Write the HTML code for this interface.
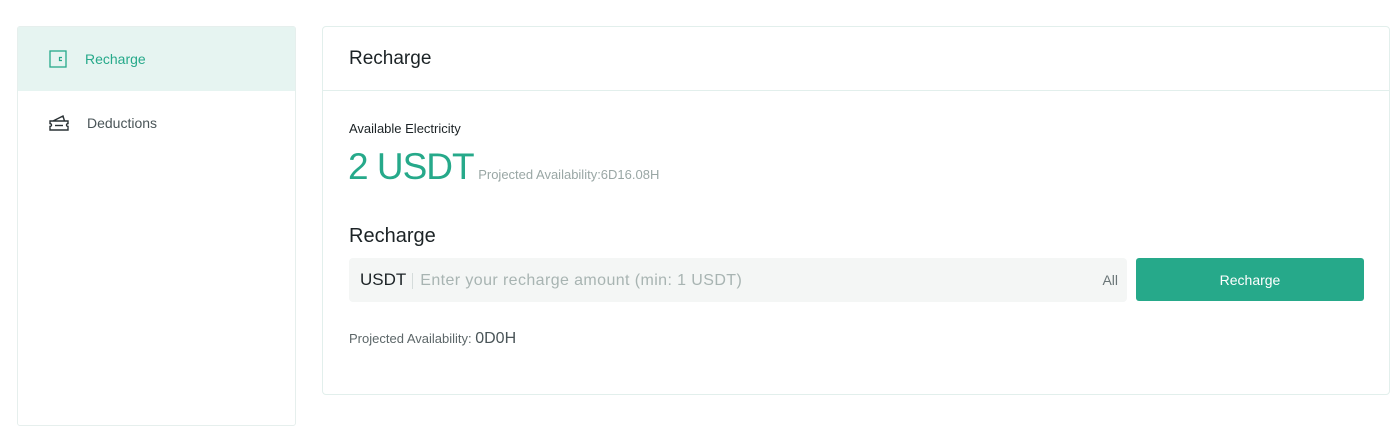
<!DOCTYPE html>
<html><head><meta charset="utf-8"><style>
*{margin:0;padding:0;box-sizing:border-box}
body{width:1400px;height:407px;background:#fff;font-family:"Liberation Sans","DejaVu Sans",sans-serif;position:relative;overflow:hidden}
.side{position:absolute;left:17px;top:26px;width:279px;height:400px;border:1px solid #e6efed;border-radius:3px}
.item{height:64px;display:flex;align-items:center;padding-left:31px;font-size:14px;color:#4a5558}
.item.act{background:#e6f4f1;color:#26a98a}
.item svg{margin-right:18px}
.main{position:absolute;left:322px;top:26px;width:1068px;height:369px;border:1px solid #e2efec;border-radius:4px}
.hd{height:64px;border-bottom:1px solid #e2efec;padding-left:26px;line-height:63px;font-size:19px;color:#1c2326}
.lbl{position:absolute;left:26px;top:94px;font-size:13px;color:#1c2326}
.big{position:absolute;left:25px;top:119px;font-size:37px;color:#26a98a;white-space:nowrap;letter-spacing:-1px}
.big span{font-size:13px;color:#9aa7a5;letter-spacing:0;margin-left:-4px}
.h2{position:absolute;left:26px;top:198px;font-size:20px;color:#1c2326}
.inp{position:absolute;left:26px;top:231px;width:778px;height:44px;background:#f4f6f5;border-radius:4px;font-size:17px;color:#1c2326;line-height:44px;padding-left:11px}
.inp .ph{color:#a8b4b2;font-size:16px;border-left:1px solid #d5dcdb;padding-left:7px;margin-left:6px;line-height:16px;display:inline-block;letter-spacing:0.4px}
.inp .all{position:absolute;right:9px;top:0;font-size:14px;color:#6a7577}
.btn{position:absolute;left:813px;top:231px;width:228px;height:43px;background:#26a98a;border-radius:3px;color:#fff;font-size:14px;text-align:center;line-height:45px}
.pa{position:absolute;left:26px;top:303px;font-size:13px;color:#5d6769}
.pa b{font-weight:normal;font-size:16px;color:#4a5558}
</style></head><body>
<div class="side">
 <div class="item act"><svg width="18" height="18" viewBox="0 0 18 18"><rect x="1" y="1" width="16" height="16" fill="none" stroke="#26a98a" stroke-width="1.3"/><path d="M13 7.5h-2.5v3H13" fill="none" stroke="#26a98a" stroke-width="1.2"/></svg>Recharge</div>
 <div class="item"><svg width="20" height="18" viewBox="0 0 20 18"><path d="M1 7h18v2.5a1.5 1.5 0 0 0 0 3V16H1v-3.5a1.5 1.5 0 0 0 0-3z M4 7l10-5 1.5 5" fill="none" stroke="#2a3235" stroke-width="1.4"/><path d="M6 11.5h8" stroke="#2a3235" stroke-width="1.4"/></svg>Deductions</div>
</div>
<div class="main">
 <div class="hd">Recharge</div>
 <div class="lbl">Available Electricity</div>
 <div class="big">2 USDT <span>Projected Availability:6D16.08H</span></div>
 <div class="h2">Recharge</div>
 <div class="inp">USDT<span class="ph">Enter your recharge amount (min: 1 USDT)</span><span class="all">All</span></div>
 <div class="btn">Recharge</div>
 <div class="pa">Projected Availability: <b>0D0H</b></div>
</div>
</body></html>
